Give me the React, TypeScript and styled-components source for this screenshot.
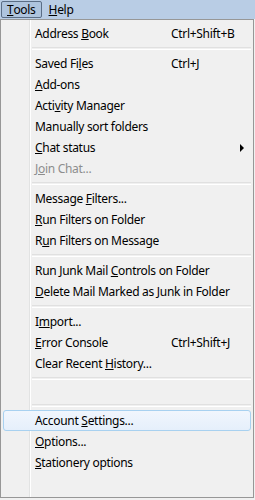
import React from "react";
import styled, { createGlobalStyle } from "styled-components";

const Global = createGlobalStyle`
  html, body { margin: 0; padding: 0; background: #f0f0f0; }
  body {
    font-family: "Segoe UI", "Noto Sans", sans-serif;
    font-size: 12px;
    letter-spacing: -0.3px;
    color: #000;
  }
`;

const Page = styled.div`
  width: 255px;
  height: 500px;
  display: flex;
  flex-direction: column;
  overflow: hidden;
  background: #f0f0f0;
`;

const MenuBar = styled.div`
  height: 19px;
  flex: none;
  display: flex;
  align-items: stretch;
  gap: 1px;
  padding: 1px 0 0 1px;
  box-sizing: border-box;
  background: #b9cde5;
`;

const BarItem = styled.div<{ $open?: boolean }>`
  display: flex;
  align-items: center;
  padding: 0 5px 0 5px;
  height: 17px;
  box-sizing: border-box;
  border: 1px solid ${(p) => (p.$open ? "#5b6e86" : "transparent")};
  border-radius: 2px;
  background: ${(p) => (p.$open ? "#aec4de" : "transparent")};
  line-height: 15px;
`;

const Popup = styled.div`
  width: 254px;
  height: 479px;
  box-sizing: border-box;
  border: 1px solid #979797;
  padding: 3px 2px 2px 2px;
  background:
    linear-gradient(
      to right,
      transparent 28px,
      #e2e3e3 28px,
      #e2e3e3 29px,
      #ffffff 29px,
      #ffffff 30px,
      transparent 30px
    ),
    #f0f0f0;
  display: flex;
  flex-direction: column;
`;

const Item = styled.div<{ $disabled?: boolean; $active?: boolean; $blank?: boolean }>`
  height: ${(p) => (p.$blank ? "18px" : "21px")};
  flex: none;
  box-sizing: border-box;
  display: grid;
  grid-template-columns: 136px 1fr;
  align-items: center;
  padding-left: 31px;
  border: 1px solid ${(p) => (p.$active ? "#a8d1f0" : "transparent")};
  border-radius: 3px;
  background: ${(p) =>
    p.$active ? "linear-gradient(to bottom, #f1f6fd, #e5effb)" : "transparent"};
  color: ${(p) => (p.$disabled ? "#8d8d8d" : "#000")};
  white-space: nowrap;
  line-height: 16px;
`;

const Label = styled.span``;

const Shortcut = styled.span`
  display: flex;
  align-items: center;
`;

const Arrow = styled.span`
  width: 0;
  height: 0;
  margin-left: auto;
  margin-right: 6px;
  border-top: 4px solid transparent;
  border-bottom: 4px solid transparent;
  border-left: 4px solid #000;
`;

const Separator = styled.div`
  height: 9px;
  flex: none;
  display: flex;
  align-items: center;
  padding-left: 29px;
`;

const SepLine = styled.div`
  flex: 1;
  height: 1px;
  border-top: 1px solid #e0e0e0;
  border-bottom: 1px solid #ffffff;
`;

const Key = styled.u`
  text-decoration: underline;
  text-underline-offset: 1px;
`;

type Entry =
  | { sep: true }
  | {
      sep?: false;
      label: string;
      key?: number;
      shortcut?: string;
      sub?: boolean;
      disabled?: boolean;
      active?: boolean;
    };

const entries: Entry[] = [
  { label: "Address Book", key: 8, shortcut: "Ctrl+Shift+B" },
  { sep: true },
  { label: "Saved Files", key: 8, shortcut: "Ctrl+J" },
  { label: "Add-ons", key: 0 },
  { label: "Activity Manager", key: 4 },
  { label: "Manually sort folders" },
  { label: "Chat status", key: 0, sub: true },
  { label: "Join Chat...", key: 1, disabled: true },
  { sep: true },
  { label: "Message Filters...", key: 8 },
  { label: "Run Filters on Folder", key: 0 },
  { label: "Run Filters on Message", key: 1 },
  { sep: true },
  { label: "Run Junk Mail Controls on Folder", key: 14 },
  { label: "Delete Mail Marked as Junk in Folder", key: 0 },
  { sep: true },
  { label: "Import...", key: 1 },
  { label: "Error Console", key: 0, shortcut: "Ctrl+Shift+J" },
  { label: "Clear Recent History...", key: 13 },
  { sep: true },
  { label: "" },
  { sep: true },
  { label: "Account Settings...", key: 8, active: true },
  { label: "Options...", key: 0 },
  { label: "Stationery options", key: 0 },
];

function renderLabel(text: string, key?: number) {
  if (key === undefined || !text) return text || "\u00a0";
  return (
    <>
      {text.slice(0, key)}
      <Key>{text[key]}</Key>
      {text.slice(key + 1)}
    </>
  );
}

export default function App() {
  return (
    <Page>
      <Global />
      <MenuBar>
        <BarItem $open>
          <Key>T</Key>ools
        </BarItem>
        <BarItem>
          <Key>H</Key>elp
        </BarItem>
      </MenuBar>
      <Popup>
        {entries.map((e, i) =>
          e.sep ? (
            <Separator key={i}>
              <SepLine />
            </Separator>
          ) : (
            <Item
              key={i}
              $disabled={e.disabled}
              $active={e.active}
              $blank={!e.label}
            >
              <Label>{renderLabel(e.label, e.key)}</Label>
              <Shortcut>
                {e.shortcut}
                {e.sub && <Arrow />}
              </Shortcut>
            </Item>
          )
        )}
      </Popup>
    </Page>
  );
}
